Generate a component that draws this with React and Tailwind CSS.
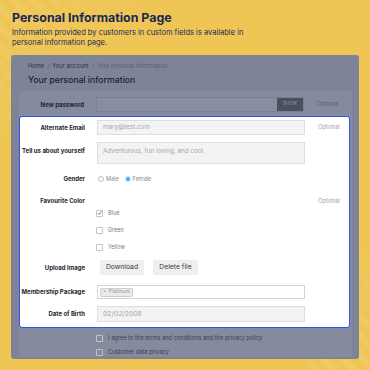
import React from 'react';

const Label = ({ children }) => (
  <div className="w-[65px] shrink-0 text-right font-bold text-[6px] text-[#1f2330] leading-none whitespace-nowrap">{children}</div>
);

const Box = ({ checked, className = '' }) => (
  <span className={`w-[7px] h-[7px] border border-[#c4c4c4] rounded-[1px] flex items-center justify-center shrink-0 ${className}`}>
    {checked && (
      <svg viewBox="0 0 10 10" className="w-[6px] h-[6px]">
        <path d="M1.5 5.5 L4 8 L8.5 2" fill="none" stroke="#333" strokeWidth="1.3" />
      </svg>
    )}
  </span>
);

const App = () => {
  return (
    <div className="relative w-[370px] h-[370px] overflow-hidden bg-[#efc655] font-[family-name:Inter] antialiased">
      <div className="absolute -left-[20px] -top-[20px] w-[150px] h-[150px] opacity-70 bg-[repeating-linear-gradient(45deg,rgba(255,255,255,0.14)_0_7px,transparent_7px_14px)] [mask-image:linear-gradient(135deg,black,transparent_70%)]" />
      <div className="absolute right-0 bottom-0 w-[60px] h-[120px] opacity-70 bg-[repeating-linear-gradient(45deg,rgba(255,255,255,0.14)_0_7px,transparent_7px_14px)] [mask-image:linear-gradient(315deg,black,transparent_80%)]" />

      <div className="relative px-[12px] pt-[10px]">
        <h1 className="text-[12.4px] font-bold text-[#1b2757] leading-[15px]">Personal Information Page</h1>
        <p className="mt-[3px] w-[250px] text-[7.5px] leading-[10px] text-[#1b2757]">
          Information provided by customers in custom fields is available in personal information page.
        </p>
      </div>

      <div className="relative ml-[11px] mt-[7px] w-[348px] h-[304px] rounded-[3px] bg-[#7e8497] overflow-hidden">
        <div className="pl-[17px] pt-[7px] h-[14px] flex items-center gap-[3px] text-[5.8px] leading-none text-[#2a2f3d]">
          <span>Home</span>
          <span className="text-[#4a5062]">/</span>
          <span>Your account</span>
          <span className="text-[#4a5062]">/</span>
          <span className="text-[#5a6072]">Your personal information</span>
        </div>
        <div className="pl-[17px] mt-[5px] text-[8.7px] leading-[12px] font-medium text-[#1a1e2b]">Your personal information</div>

        <div className="ml-[8px] mt-[5px] w-[333px] h-[266px] bg-[#858b9e] rounded-[2px]">
          <div className="pt-[6px] flex items-center h-[21px]">
            <Label>New password</Label>
            <div className="ml-[12px] w-[208px] h-[15px] flex bg-[#888ea1] border border-[#7a8092]">
              <div className="flex-1" />
              <div className="w-[26px] bg-[#4b5061] flex items-center justify-center text-[4.5px] text-[#8d92a3]">SHOW</div>
            </div>
            <span className="ml-[13px] text-[5.5px] text-[#5a6072]">Optional</span>
          </div>

          <div className="mt-[4px] w-[331px] h-[212px] bg-white border border-[#2f55f0] rounded-[3px]">
            <div className="mt-[3px] flex items-center h-[15px]">
              <Label>Alternate Email</Label>
              <div className="ml-[12px] w-[208px] h-[15px] bg-[#f3f3f3] border border-[#dedede] flex items-center px-[5px] text-[6.3px] text-[#a5a5a5]">mary@test.com</div>
              <span className="ml-[13px] text-[5.5px] text-[#a0a0a0]">Optional</span>
            </div>

            <div className="mt-[7px] flex items-start h-[22px]">
              <div className="mt-[6px]"><Label>Tell us about yourself</Label></div>
              <div className="ml-[12px] w-[208px] h-[22px] bg-[#f3f3f3] border border-[#dedede] px-[5px] pt-[5px] text-[6.3px] leading-none text-[#a5a5a5]">Adventurous, fun loving, and cool.</div>
            </div>

            <div className="mt-[9px] flex items-center h-[12px]">
              <Label>Gender</Label>
              <div className="ml-[13px] flex items-center text-[5.5px] text-[#8a8a8a]">
                <span className="w-[6px] h-[6px] rounded-full border border-[#bdbdbd]" />
                <span className="ml-[2px]">Male</span>
                <span className="ml-[6px] w-[6px] h-[6px] rounded-full bg-[#33b6e6] border-[1.5px] border-[#cdeefa]" />
                <span className="ml-[2px]">Female</span>
              </div>
            </div>

            <div className="mt-[10px] flex items-center h-[12px]">
              <Label>Favourite Color</Label>
              <div className="ml-[12px] w-[208px]" />
              <span className="ml-[13px] text-[5.5px] text-[#a0a0a0]">Optional</span>
            </div>

            {[['Blue', true, 'mt-[1px]'], ['Green', false, 'mt-[7px]'], ['Yellow', false, 'mt-[7px]']].map(([name, checked, m]) => (
              <div key={name} className={`${m} h-[10px] flex items-center pl-[76px] text-[5.5px] text-[#7a7a7a]`}>
                <Box checked={checked} />
                <span className="ml-[5px]">{name}</span>
              </div>
            ))}

            <div className="mt-[8px] flex items-center h-[15px]">
              <Label>Upload Image</Label>
              <div className="ml-[15px] flex gap-[9px] text-[6.8px] text-[#3a3a3a]">
                <div className="w-[44px] h-[15px] bg-[#efefef] flex items-center justify-center">Download</div>
                <div className="w-[45px] h-[15px] bg-[#efefef] flex items-center justify-center">Delete file</div>
              </div>
            </div>

            <div className="mt-[10px] flex items-center h-[14px]">
              <Label>Membership Package</Label>
              <div className="ml-[12px] w-[208px] h-[14px] bg-white border border-[#d4d4d4] flex items-center pl-[2px]">
                <span className="h-[9px] px-[2px] bg-[#ececec] border border-[#d0d0d0] rounded-[1px] flex items-center text-[5.3px] text-[#9a9a9a]">
                  <span className="mr-[2px]">×</span>Platinum
                </span>
              </div>
            </div>

            <div className="mt-[7px] flex items-center h-[16px]">
              <Label>Date of Birth</Label>
              <div className="ml-[12px] w-[208px] h-[16px] bg-[#f3f3f3] border border-[#dedede] flex items-center px-[5px] text-[6.8px] text-[#a5a5a5]">02/02/2008</div>
            </div>
          </div>

          <div className="mt-[5px] h-[10px] flex items-center pl-[77px] text-[5.7px] text-[#3a3f4e]">
            <Box className="border-[#6f7587]" />
            <span className="ml-[5px]">I agree to the terms and conditions and the privacy policy</span>
          </div>
          <div className="mt-[4px] h-[10px] flex items-center pl-[77px] text-[5.7px] text-[#3a3f4e]">
            <Box className="border-[#6f7587]" />
            <span className="ml-[5px]">Customer data privacy</span>
          </div>
        </div>
      </div>
    </div>
  );
};

export default App;
